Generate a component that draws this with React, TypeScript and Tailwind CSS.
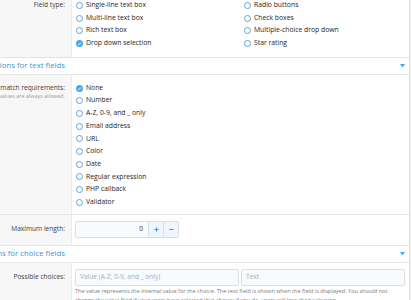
import React from "react";

function Radio({ label, checked = false }: { label: string; checked?: boolean }) {
  return (
    <div className="flex items-center h-[12.7px] whitespace-nowrap">
      {checked ? (
        <span className="w-[7px] h-[7px] rounded-full bg-[#47a7eb] flex items-center justify-center shrink-0">
          <svg viewBox="0 0 8 8" className="w-[5px] h-[5px]">
            <path d="M1.5 4.2 L3.3 5.9 L6.6 2.3" fill="none" stroke="#fff" strokeWidth="1.4" />
          </svg>
        </span>
      ) : (
        <span className="w-[7px] h-[7px] rounded-full border border-[#5aa5de] bg-white shrink-0" />
      )}
      <span className="ml-[3px] text-[6.8px] text-[#262626]">{label}</span>
    </div>
  );
}

function Header({ text }: { text: string }) {
  return (
    <div className="h-[17px] flex items-center justify-between border-b border-[#e6e6e6] bg-white pr-[4px]">
      <div className="flex justify-end w-[65px] whitespace-nowrap text-[7.8px] text-[#3f94d4]">
        <span>{text}</span>
      </div>
      <svg viewBox="0 0 6 4" className="w-[5px] h-[3.5px]">
        <path d="M0 0 H6 L3 4 Z" fill="#47a7eb" />
      </svg>
    </div>
  );
}

export default function App() {
  return (
    <div className="w-[411px] h-[300px] overflow-hidden bg-[#f3f3f3] font-['Open_Sans','Noto_Sans',sans-serif] text-[6.6px] leading-[12.7px]">
      <div className="w-[410px] border-r border-[#dcdcdc] bg-white">
        {/* Field type */}
        <div className="flex border-b border-[#e2e2e2]">
          <div className="w-[72px] shrink-0 bg-[#f7f7f7] border-r border-[#ececec] pr-[6px] pb-[7px] -mt-[1px] text-right text-[#3d3d3d]">
            Field type:
          </div>
          <div className="flex-1 pl-[4px] pb-[7px] -mt-[1px] grid grid-cols-[168px_1fr]">
            <div>
              <Radio label="Single-line text box" />
              <Radio label="Multi-line text box" />
              <Radio label="Rich text box" />
              <Radio label="Drop down selection" checked />
            </div>
            <div>
              <Radio label="Radio buttons" />
              <Radio label="Check boxes" />
              <Radio label="Multiple-choice drop down" />
              <Radio label="Star rating" />
            </div>
          </div>
        </div>

        <Header text="Options for text fields" />

        {/* Value match requirements */}
        <div className="flex border-b border-[#e6e6e6]">
          <div className="w-[72px] shrink-0 bg-[#f7f7f7] border-r border-[#ececec] pr-[6px] pt-[7px] pb-[5px] flex flex-col items-end whitespace-nowrap text-[#3d3d3d]">
            <div className="leading-[11px]">Value match requirements:</div>
            <div className="text-[5.4px] leading-[6px] text-[#9a9a9a]">Empty values are always allowed.</div>
          </div>
          <div className="flex-1 pl-[4px] pt-[7px] pb-[5px]">
            <Radio label="None" checked />
            <Radio label="Number" />
            <Radio label="A-Z, 0-9, and _ only" />
            <Radio label="Email address" />
            <Radio label="URL" />
            <Radio label="Color" />
            <Radio label="Date" />
            <Radio label="Regular expression" />
            <Radio label="PHP callback" />
            <Radio label="Validator" />
          </div>
        </div>

        {/* Maximum length */}
        <div className="flex h-[30px]">
          <div className="w-[72px] shrink-0 bg-[#f7f7f7] border-r border-[#ececec] pr-[6px] flex items-center justify-end whitespace-nowrap text-[#3d3d3d]">
            Maximum length:
          </div>
          <div className="flex-1 pl-[3px] flex items-center">
            <div className="flex h-[17px] w-[104px] border border-[#dadfe4] rounded-[2px] bg-[#f8fbfe]">
              <div className="flex-1 flex items-center justify-end pr-[5px] text-[#3a3a3a]">0</div>
              <div className="w-[15px] border-l border-[#dadfe4] bg-[#eef5fc] flex items-center justify-center">
                <svg viewBox="0 0 8 8" className="w-[5px] h-[5px]">
                  <path d="M4 0.5 V7.5 M0.5 4 H7.5" stroke="#3d97dc" strokeWidth="1.6" />
                </svg>
              </div>
              <div className="w-[15px] border-l border-[#dadfe4] bg-[#eef5fc] flex items-center justify-center">
                <svg viewBox="0 0 8 8" className="w-[5px] h-[5px]">
                  <path d="M0.5 4 H7.5" stroke="#3d97dc" strokeWidth="1.6" />
                </svg>
              </div>
            </div>
          </div>
        </div>

        <div className="border-t border-[#e6e6e6]">
          <Header text="Options for choice fields" />
        </div>

        {/* Possible choices */}
        <div className="flex">
          <div className="w-[72px] shrink-0 bg-[#f7f7f7] border-r border-[#ececec] pr-[6px] pt-[6px] flex justify-end whitespace-nowrap text-[#3d3d3d]">
            <div className="h-[17px] flex items-center">Possible choices:</div>
          </div>
          <div className="flex-1 pl-[3px] pr-[4px] pt-[6px]">
            <div className="flex gap-[2px]">
              <div className="flex-1 h-[17px] border border-[#dadfe4] rounded-[2px] bg-[#f8fbfe] flex items-center pl-[4px] text-[#ababab] whitespace-nowrap overflow-hidden">
                Value (A-Z, 0-9, and _ only)
              </div>
              <div className="flex-1 h-[17px] border border-[#dadfe4] rounded-[2px] bg-[#f8fbfe] flex items-center pl-[4px] text-[#ababab]">
                Text
              </div>
            </div>
            <div className="mt-[1px] text-[5.6px] leading-[9px] text-[#7a7a7a] pr-[6px]">
              The value represents the internal value for the choice. The text field is shown when the field is displayed. You should not change the value field if your users have selected that choice; if you do, users will lose their selection.
            </div>
          </div>
        </div>
      </div>
    </div>
  );
}
